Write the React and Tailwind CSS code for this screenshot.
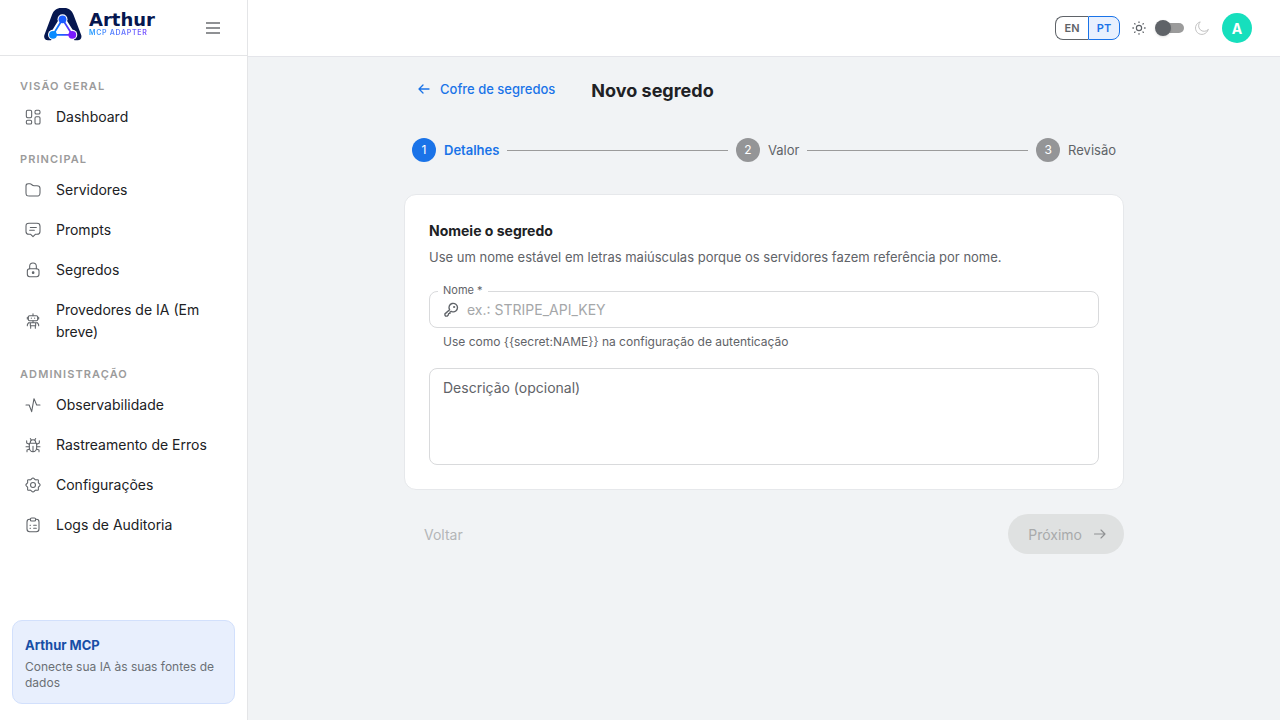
import React from "react";

function Icon({ children, className = "size-4" }) {
  return (
    <svg
      viewBox="0 0 24 24"
      fill="none"
      stroke="currentColor"
      strokeWidth="1.6"
      strokeLinecap="round"
      strokeLinejoin="round"
      aria-hidden="true"
      className={`shrink-0 ${className}`}
    >
      {children}
    </svg>
  );
}

const icons = {
  dashboard: (
    <>
      <rect x="2" y="2" width="8" height="11" rx="2" />
      <rect x="15" y="2" width="7.500" height="5.500" rx="2" />
      <rect x="2" y="17" width="8" height="5.500" rx="2" />
      <rect x="15" y="11.500" width="7.500" height="11" rx="2" />
    </>
  ),
  folder: (
    <path d="M1.500 6C1.500 3.500 2.500 2.500 4.800 2.500h2.500c1.300 0 2 .5 2.800 1.300l.7.700c.8.800 1.500 1 2.800 1H18c3.500 0 4.500 1.200 4.500 4V16c0 4-1 5-5 5h-11c-4 0-5-1-5-5V6Z" />
  ),
  prompt: (
    <>
      <path d="M6 2h12c3.300 0 4.500 1.200 4.500 4.200v8c0 3-1.200 4.300-4.500 4.300h-2.500L12 22l-3.500-3.500H6c-3.300 0-4.500-1.300-4.500-4.300v-8C1.500 3.200 2.700 2 6 2Z" />
      <path d="M8 8.200h9M7 12.500h7" />
    </>
  ),
  lock: (
    <>
      <path d="M7 10V6.500a5 5 0 0 1 10 0V10" />
      <rect x="3.500" y="10" width="17.500" height="12" rx="3.500" />
      <circle cx="12.200" cy="16" r="1.200" fill="currentColor" />
    </>
  ),
  robot: (
    <>
      <path d="M12 1v3M3.500 6.500v2.500M20.500 6.500v2.500" />
      <rect x="5" y="4" width="14" height="7.500" rx="1.800" />
      <path d="M9.500 7.600v.4M14.500 7.600v.4" />
      <path d="M8 14.500h8v4.500H8ZM8 14.500H5.500l-2 3M16 14.500h2.500l2 3M3.500 17.500v1.500M20.500 17.500v1.500M8.500 19v4M15.500 19v4M12 11.500v3" />
    </>
  ),
  activity: <path d="M1.500 12h4.700L10 22 13.500 2.500 17.500 12h5" />,
  bug: (
    <>
      <path d="M6.500 9.500h11v7a5.500 5.500 0 0 1-11 0v-7ZM8 9.500V8a4 4 0 0 1 8 0v1.500M12 14v8" />
      <path d="M9.500 4.500 8 2.500M14.500 4.500 16 2.500M6.500 11 2.500 9V5.500M17.500 11l4-2V5.500M1.500 14.500h5M17.500 14.500h5M7 18l-4 1.500V22M17 18l4 1.500V22" />
    </>
  ),
  gear: (
    <>
      <circle cx="12" cy="12" r="3.700" />
      <path d="M12 1.500c1.700 0 2.100 2.100 3.600 2.700s3.200-.7 4.200.3-.3 2.700.3 4.100 2.600 1.800 2.600 3.400-2 1.900-2.600 3.400.7 3.100-.3 4.100-2.800-.3-4.200.3-1.900 2.700-3.600 2.700-2.100-2.100-3.600-2.700-3.200.7-4.200-.3.300-2.700-.3-4.100-2.600-1.800-2.600-3.400 2-1.900 2.600-3.400-.7-3.100.3-4.100 2.800.3 4.200-.3S10.300 1.500 12 1.500Z" />
    </>
  ),
  clipboard: (
    <>
      <path d="M8 3.500H7c-3 0-4 1-4 4v10.500c0 3 1 4 4 4h10c3 0 4-1 4-4V7.500c0-3-1-4-4-4h-1" />
      <rect x="8" y="1.500" width="8" height="4.500" rx="2" />
      <path d="M7.500 12.500h.8M7.500 17h.8M13 12.500h4M13 17h4" />
    </>
  ),
};

const sections = [
  { title: "VISÃO GERAL", items: [["Dashboard", "dashboard"]] },
  {
    title: "PRINCIPAL",
    items: [
      ["Servidores", "folder"],
      ["Prompts", "prompt"],
      ["Segredos", "lock"],
      ["Provedores de IA (Em breve)", "robot"],
    ],
  },
  {
    title: "ADMINISTRAÇÃO",
    items: [
      ["Observabilidade", "activity"],
      ["Rastreamento de Erros", "bug"],
      ["Configurações", "gear"],
      ["Logs de Auditoria", "clipboard"],
    ],
  },
];

function Logo() {
  return (
    <a href="#" className="flex gap-[7px]">
      <svg viewBox="0 0 38 33" className="h-[33px] w-[38px]" aria-hidden="true">
        <defs>
          <linearGradient id="edge" x1="9" y1="0" x2="28" y2="0" gradientUnits="userSpaceOnUse">
            <stop stopColor="#0a8cff" />
            <stop offset="0.5" stopColor="#1f5bff" />
            <stop offset="1" stopColor="#7a1cff" />
          </linearGradient>
        </defs>
        <path
          d="M4 32.300C1 32.300-.5 29.500.4 27L8 6.800C9.700 2.300 12.700 0 17 0h3.500c4.300 0 7.300 2.300 9 6.800L37.200 27c.9 2.500-.6 5.300-3.600 5.300H4Z"
          fill="#06174f"
        />
        <path d="M18.500 11.300 9 26.800h19.300Z" fill="#fff" stroke="#fff" strokeWidth="6" strokeLinejoin="round" />
        <g fill="#fff">
          <circle cx="18.500" cy="11.300" r="5" />
          <circle cx="9" cy="26.800" r="5" />
          <circle cx="28.300" cy="26.800" r="5" />
          <path d="M7.500 31 10 28h17.500l2.500 3 .5 2h-23.500Z" />
        </g>
        <path d="M18.500 11.300 9 26.800h19.300Z" fill="none" stroke="url(#edge)" strokeWidth="1.800" />
        <circle cx="18.500" cy="11.300" r="3.900" fill="#1a5cff" />
        <circle cx="9" cy="26.800" r="3.900" fill="#0a8cff" />
        <circle cx="28.300" cy="26.800" r="3.900" fill="#7a1cff" />
      </svg>
      <span className="flex flex-col pt-0.5">
        <span className="font-['DejaVu_Sans',sans-serif] text-[18px] leading-[19px] font-bold text-[#06174f]">Arthur</span>
        <span className="bg-gradient-to-r from-[#0a9cff] to-[#7a3cff] bg-clip-text text-[7px] leading-[8px] font-semibold tracking-widest text-transparent">
          MCP ADAPTER
        </span>
      </span>
    </a>
  );
}

function Sidebar() {
  return (
    <aside className="flex w-62 shrink-0 flex-col border-r border-[#e4e5e7] bg-white">
      <div className="flex h-14 items-start justify-between border-b border-[#e4e5e7] pt-2 pr-[27px] pl-11">
        <Logo />
        <button type="button" aria-label="Recolher menu" className="mt-3 text-[#6b6e72]">
          <svg viewBox="0 0 14 16" className="h-4 w-3.5" stroke="currentColor" strokeWidth="1.500" aria-hidden="true">
            <path d="M0 3h14M0 8h14M0 13h14" />
          </svg>
        </button>
      </div>
      <nav className="flex-1 pt-2">
        {sections.map((section) => (
          <div key={section.title}>
            <h2 className="px-5 pt-[11px] text-[11px] leading-[22px] font-semibold tracking-widest text-[#9b9b9b]">
              {section.title}
            </h2>
            <ul>
              {section.items.map(([label, icon]) => (
                <li key={label}>
                  <a href="#" className="flex items-center gap-[15px] py-[9px] pr-9 pl-[25px] text-[14px] leading-[22px] text-[#202124]">
                    <Icon className="size-4 text-[#5f6368]">{icons[icon]}</Icon>
                    {label}
                  </a>
                </li>
              ))}
            </ul>
          </div>
        ))}
      </nav>
      <div className="m-3 mb-4 rounded-[10px] border border-[#d2e0fc] bg-[#e8effd] px-3 pt-3.5 pb-3">
        <p className="text-[13px] leading-5 font-bold text-[#174ea6]">Arthur MCP</p>
        <p className="mt-1 text-[12px] leading-4 text-[#6b6f75]">Conecte sua IA às suas fontes de dados</p>
      </div>
    </aside>
  );
}

function TopBar() {
  return (
    <header className="flex h-[57px] shrink-0 items-center justify-end border-b border-[#e4e5ea] bg-white pr-7">
      <div className="flex h-6 text-[11px] leading-4 font-semibold">
        <button type="button" className="w-[33px] rounded-l-lg border border-r-0 border-[#5f6368] text-[#5f6368]">
          EN
        </button>
        <button type="button" className="w-8 rounded-r-lg border border-[#1a73e8] bg-[#e8f0fe] text-[#1a73e8]">
          PT
        </button>
      </div>
      <Icon className="ml-3 size-3.5 text-[#5f6368]">
        <circle cx="12" cy="12" r="4.500" strokeWidth="2" />
        <path strokeWidth="2.200" d="M12 1.500v1M12 21.500v1M1.500 12h1M21.500 12h1M4.500 4.500l.7.700M18.800 18.800l.7.700M19.500 4.500l-.7.700M5.200 18.800l-.7.700" />
      </Icon>
      <label className="ml-2.5 flex">
        <input type="checkbox" role="switch" aria-label="Tema escuro" className="peer sr-only" />
        <span className="my-[3px] flex h-2.5 w-7 items-center rounded-full bg-[#9b9b9b]">
          <span className="-ml-px size-4 shrink-0 rounded-full bg-[#5f6368] shadow-sm" />
        </span>
      </label>
      <Icon className="ml-[11px] size-3.5 text-[#bdbdbd]">
        <path d="M22.500 15A11 11 0 1 1 9 1.500 9.300 9.300 0 0 0 22.500 15Z" />
      </Icon>
      <button type="button" className="ml-[13px] size-[30px] rounded-full bg-[#16dfbd] text-[14px] font-bold text-white">
        A
      </button>
    </header>
  );
}

function Stepper() {
  const steps = ["Detalhes", "Valor", "Revisão"];
  return (
    <ol className="mt-8 flex items-center px-2">
      {steps.map((step, i) => (
        <React.Fragment key={step}>
          {i > 0 && <li aria-hidden="true" className="mx-2 h-px flex-1 bg-[#9b9b9b]" />}
          <li className="flex items-center gap-2">
            <span
              className={`flex size-6 items-center justify-center rounded-full text-[12px] text-white ${
                i === 0 ? "bg-[#1a73e8]" : "bg-[#949597]"
              }`}
            >
              {i + 1}
            </span>
            <span className={`text-[13px] leading-5 ${i === 0 ? "font-semibold text-[#1a73e8]" : "text-[#5f6368]"}`}>
              {step}
            </span>
          </li>
        </React.Fragment>
      ))}
    </ol>
  );
}

export default function App() {
  return (
    <div className="flex min-h-screen bg-[#f1f3f5] font-['Inter','Liberation_Sans',sans-serif] text-[#202124]">
      <Sidebar />
      <div className="flex min-w-0 flex-1 flex-col">
        <TopBar />
        <main className="mx-auto w-full max-w-[720px] pt-[19px]">
          <div className="flex items-start gap-9 pl-3.5">
            <a href="#" className="flex items-center gap-2.5 text-[13px] leading-[26px] font-medium text-[#1a73e8]">
              <Icon className="size-3">
                <path strokeWidth="2.600" d="M22 12H2.500M10 4l-8 8 8 8" />
              </Icon>
              Cofre de segredos
            </a>
            <h1 className="text-[18px] leading-[30px] font-bold">Novo segredo</h1>
          </div>
          <Stepper />
          <form id="secret" className="mt-8 rounded-xl border border-[#e6e8eb] bg-white p-6">
            <h2 className="text-[14px] leading-6 font-bold">Nomeie o segredo</h2>
            <p className="mt-1 text-[13px] leading-5 text-[#5f6368]">
              Use um nome estável em letras maiúsculas porque os servidores fazem referência por nome.
            </p>
            <div className="relative mt-6 flex h-[37px] items-center gap-2 rounded-lg border border-[#d9dadc] px-3.5">
              <label htmlFor="name" className="absolute -top-[9px] left-2 bg-white px-[5px] text-[11px] leading-3.5 text-[#5f6368]">
                Nome *
              </label>
              <Icon className="size-[15px] text-[#5f6368]">
                <path strokeWidth="2.200" d="M9 12.500A6.800 6.800 0 1 1 13 15.500l-1.500-.5-2 1v2.300l-2.200.2-.5 2.500-1.500 1.500H2.500L1.500 21v-2Z" />
                <circle cx="16" cy="8" r="1" />
              </Icon>
              <input
                id="name"
                type="text"
                placeholder="ex.: STRIPE_API_KEY"
                className="min-w-0 flex-1 bg-transparent text-[14px] leading-5 outline-none placeholder:text-[#a5a7a9]"
              />
            </div>
            <p className="mt-1 px-3.5 text-[12px] leading-5 text-[#5f6368]">
              Use como {"{{secret:NAME}}"} na configuração de autenticação
            </p>
            <div className="relative mt-4">
              <textarea
                id="description"
                className="block h-[97px] w-full resize-none rounded-lg border border-[#d9dadc] px-3.5 py-2 text-[14px] outline-none"
              />
              <label htmlFor="description" className="absolute top-2 left-3.5 text-[14px] leading-6 text-[#5f6368]">
                Descrição (opcional)
              </label>
            </div>
          </form>
          <div className="mt-6 flex items-center justify-between">
            <button type="button" disabled className="h-10 px-5 text-[14px] text-[#b4b6b8]">
              Voltar
            </button>
            <button
              type="submit"
              form="secret"
              disabled
              className="flex h-10 items-center gap-3 rounded-full bg-[#dfe1e1] pr-[18px] pl-5 text-[14px] text-[#a8aaab]"
            >
              Próximo
              <Icon className="size-3 text-[#8f9193]">
                <path strokeWidth="2.200" d="M1 12h21M14 4l8 8-8 8" />
              </Icon>
            </button>
          </div>
        </main>
      </div>
    </div>
  );
}
